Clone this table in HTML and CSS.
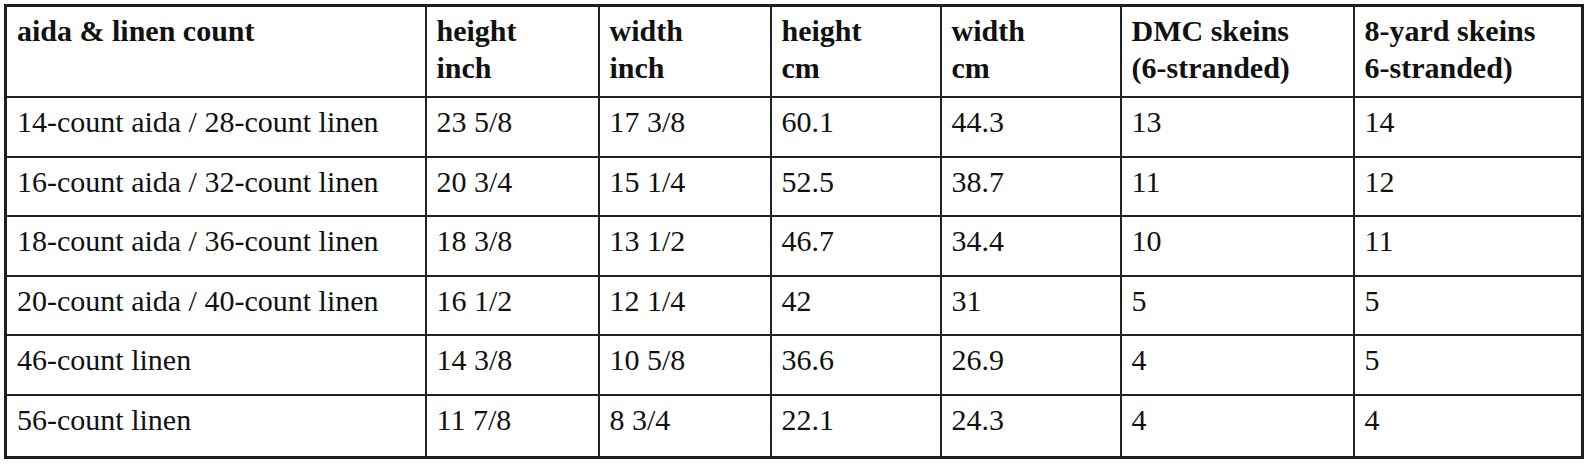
FILE: index.html
```html
<!DOCTYPE html>
<html lang="en">
<head>
<meta charset="utf-8">
<title>Cross stitch sizes</title>
<link rel="stylesheet" href="styles.css">
</head>
<body>
<table class="sizes">
  <colgroup>
    <col class="c1"><col class="c2"><col class="c3"><col class="c4"><col class="c5"><col class="c6"><col class="c7">
  </colgroup>
  <thead>
    <tr>
      <th>aida &amp; linen count</th>
      <th>height<br>inch</th>
      <th>width<br>inch</th>
      <th>height<br>cm</th>
      <th>width<br>cm</th>
      <th>DMC skeins<br>(6-stranded)</th>
      <th>8-yard skeins<br>6-stranded)</th>
    </tr>
  </thead>
  <tbody>
    <tr><td>14-count aida / 28-count linen</td><td>23 5/8</td><td>17 3/8</td><td>60.1</td><td>44.3</td><td>13</td><td>14</td></tr>
    <tr><td>16-count aida / 32-count linen</td><td>20 3/4</td><td>15 1/4</td><td>52.5</td><td>38.7</td><td>11</td><td>12</td></tr>
    <tr><td>18-count aida / 36-count linen</td><td>18 3/8</td><td>13 1/2</td><td>46.7</td><td>34.4</td><td>10</td><td>11</td></tr>
    <tr><td>20-count aida / 40-count linen</td><td>16 1/2</td><td>12 1/4</td><td>42</td><td>31</td><td>5</td><td>5</td></tr>
    <tr><td>46-count linen</td><td>14 3/8</td><td>10 5/8</td><td>36.6</td><td>26.9</td><td>4</td><td>5</td></tr>
    <tr class="last"><td>56-count linen</td><td>11 7/8</td><td>8 3/4</td><td>22.1</td><td>24.3</td><td>4</td><td>4</td></tr>
  </tbody>
</table>
</body>
</html>
```

FILE: styles.css
```css
html, body {
  background: #ffffff;
}

body {
  margin: 4px;
  font-family: "Liberation Serif", "Times New Roman", serif;
  font-size: 30px;
  color: #111111;
}

.sizes {
  border-collapse: collapse;
  table-layout: fixed;
  width: 1580px;
  border: 3px solid #1e1e1e;
}

.sizes .c1 { width: 420px; }
.sizes .c2 { width: 173px; }
.sizes .c3 { width: 172px; }
.sizes .c4 { width: 170px; }
.sizes .c5 { width: 180px; }
.sizes .c6 { width: 233px; }
.sizes .c7 { width: 229px; }

.sizes th,
.sizes td {
  border: 2px solid #222222;
  text-align: left;
  vertical-align: top;
  line-height: 37px;
  padding: 5px 10px 15.5px;
  white-space: nowrap;
}

.sizes th {
  font-weight: bold;
  padding: 5px 10px 10px;
}

.sizes .last td {
  padding-bottom: 18px;
}
```
